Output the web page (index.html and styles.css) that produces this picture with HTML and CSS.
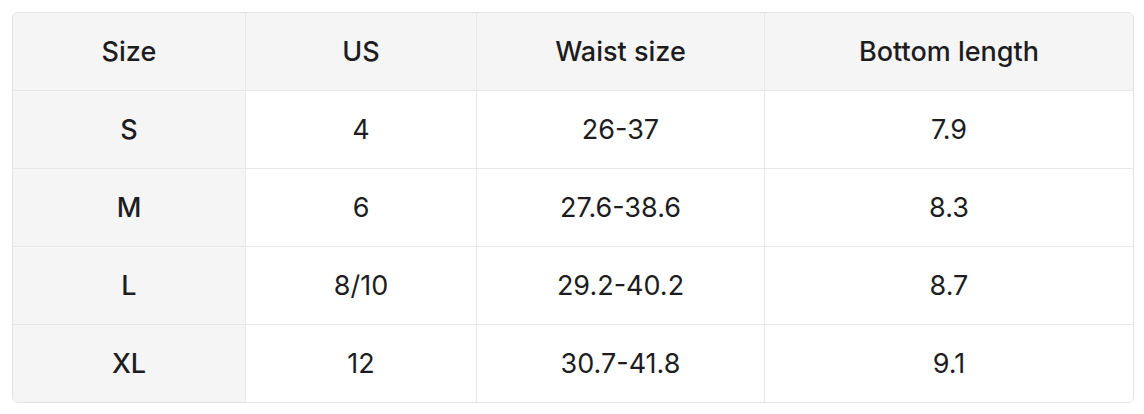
FILE: index.html
```html
<!DOCTYPE html>
<html>
<head>
<meta charset="utf-8">
<link rel="stylesheet" href="styles.css">
</head>
<body>
<div class="wrap">
<table class="sizes">
<colgroup><col class="c1"><col class="c2"><col class="c3"><col class="c4"></colgroup>
<thead>
<tr><th>Size</th><th>US</th><th>Waist size</th><th>Bottom length</th></tr>
</thead>
<tbody>
<tr><th>S</th><td>4</td><td>26-37</td><td>7.9</td></tr>
<tr><th>M</th><td>6</td><td>27.6-38.6</td><td>8.3</td></tr>
<tr><th>L</th><td>8/10</td><td>29.2-40.2</td><td>8.7</td></tr>
<tr><th>XL</th><td>12</td><td>30.7-41.8</td><td>9.1</td></tr>
</tbody>
</table>
</div>
</body>
</html>
```
FILE: styles.css
```css
html, body { margin: 0; padding: 0; background: #fff; }
body { font-family: Inter, "Noto Sans", sans-serif; color: #1d1d1f; }
.wrap { padding: 12px; }
.sizes {
  width: 1120px;
  border-collapse: separate;
  border-spacing: 0;
  border: 1px solid #e3e3e3;
  border-radius: 6px;
  overflow: hidden;
  table-layout: fixed;
}
.c1 { width: 233px; }
.c2 { width: 231px; }
.c3 { width: 288px; }
.c4 { width: 368px; }
.sizes th, .sizes td {
  height: 77px;
  padding: 0;
  text-align: center;
  vertical-align: middle;
  font-size: 27px;
  line-height: 1;
  border-right: 1px solid #e8e8e8;
  border-bottom: 1px solid #e8e8e8;
}
.sizes tr > :last-child { border-right: none; }
.sizes tbody tr:last-child > * { border-bottom: none; }
.sizes thead th { background: #f5f5f5; font-weight: 500; }
.sizes tbody th { background: #f5f5f5; font-weight: 500; }
.sizes td { font-weight: 400; background: #fff; }
```
